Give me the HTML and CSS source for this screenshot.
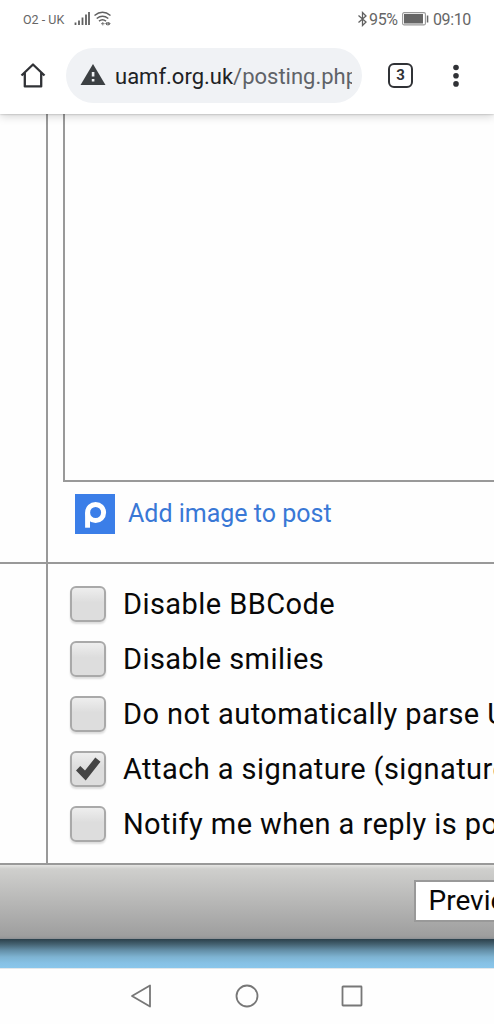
FILE: index.html
```html
<!DOCTYPE html>
<html lang="en">
<head>
<meta charset="utf-8">
<title>Post a reply</title>
<link rel="stylesheet" href="styles.css">
</head>
<body>
<div class="phone">
  <header class="chrome">
    <div class="status">
      <span class="carrier">O2 - UK</span>
      <svg class="signal" width="38" height="18" viewBox="0 0 38 18" fill="none">
        <path d="M1.500 16v-2.500M5 16v-4.500M8.500 16v-7.500M12 16v-10.500M15 16v-13" stroke="#606060" stroke-width="1.800"/>
        <path d="M20.500 6.500Q28.500 0 36.500 6.500M22.700 9.500Q28.500 5 34.300 9.500M25 12.200Q28.500 9.500 32 12.200" stroke="#606060" stroke-width="1.500"/>
        <path d="M27 14.700h3.600M28.800 13v3.400M33.200 13.200l-1.500 1.500 1.500 1.500zM34.600 13.200l1.500 1.500-1.500 1.500z" stroke="#606060" stroke-width=".8" fill="#606060"/>
      </svg>
      <svg class="bluetooth" width="11" height="16" viewBox="0 0 11 16" fill="none" stroke="#606060" stroke-width="1.300"><path d="M1.500 4.500L9 11 5.500 14.500v-13L9 5 1.500 11.500"/></svg>
      <span class="percent">95%</span>
      <svg class="battery" width="27" height="14" viewBox="0 0 27 14"><rect x=".6" y=".6" width="22.800" height="12.300" rx="1.500" fill="none" stroke="#999" stroke-width="1.100"/><path d="M2 2h19v9.500H2z" fill="#666"/><path d="M24.800 3.500h1.500v7h-1.500z" fill="#666"/></svg>
      <span class="clock">09:10</span>
    </div>
    <div class="toolbar">
      <svg class="home" width="26" height="28" viewBox="0 0 26 28" fill="none" stroke="#303236" stroke-width="2.300"><path d="M1.500 14.500L13 3.500 24.500 14.500M4.800 12V25.400h16.400V12" stroke-linejoin="round"/></svg>
      <div class="address">
        <svg width="26" height="22" viewBox="0 0 26 22"><path d="M13 0L25.500 21H.5z" fill="#3c4043"/><path d="M11.800 8h2.600v4.500h-2.600zM11.800 15h2.600v2.600h-2.600z" fill="#f0f2f5"/></svg>
        <div class="url">uamf.org.uk<span class="path">/posting.php</span></div>
      </div>
      <div class="tabs">3</div>
      <svg class="more" width="8" height="24" viewBox="0 0 8 24" fill="#303236"><circle cx="4" cy="3.500" r="2.800"/><circle cx="4" cy="11.700" r="2.800"/><circle cx="4" cy="19.900" r="2.800"/></svg>
    </div>
  </header>
  <main class="page">
    <div class="row message">
      <div class="label"></div>
      <div class="cell">
        <div class="editor"></div>
        <div class="upload">
          <svg width="40" height="40" viewBox="0 0 40 40"><path d="M0 0h40v40H0z" fill="#3b7ee8"/><circle cx="20.600" cy="18.500" r="8" fill="none" stroke="#fff" stroke-width="5"/><path d="M10.100 18.500h4.900v15.200h-4.900z" fill="#fff"/></svg>
          <span>Add image to post</span>
        </div>
      </div>
    </div>
    <div class="row options">
      <div class="label"></div>
      <div class="cell">
        <div class="option"><span class="box"></span><span>Disable BBCode</span></div>
        <div class="option"><span class="box"></span><span>Disable smilies</span></div>
        <div class="option"><span class="box"></span><span>Do not automatically parse URLs</span></div>
        <div class="option"><span class="box"><svg width="30" height="30" viewBox="0 0 30 30"><path d="M3 16.500L7.300 12l4.700 4.600L22.300 3.500l5.200 4.200L12.700 26.500z" fill="#444"/></svg></span><span>Attach a signature (signatures</span></div>
        <div class="option"><span class="box"></span><span>Notify me when a reply is posted</span></div>
      </div>
    </div>
    <div class="actions"><div class="preview">Preview</div></div>
    <div class="backdrop"></div>
  </main>
  <footer class="nav">
    <svg width="22" height="24" viewBox="0 0 22 24"><path d="M20 1.500v21L2 12z"/></svg>
    <svg width="24" height="24" viewBox="0 0 24 24"><circle cx="12" cy="12" r="10.500"/></svg>
    <svg class="recents" width="22" height="22" viewBox="0 0 22 22"><rect x="1.500" y="1.500" width="19" height="19" rx=".5"/></svg>
  </footer>
</div>
</body>
</html>
```
FILE: styles.css
```css
* { box-sizing: border-box; }
body { margin: 0; background: #fefefe; font-family: Roboto, "Liberation Sans", sans-serif; }
svg { display: block; flex: none; }
.phone { width: 100%; height: 1024px; overflow: hidden; display: flex; flex-direction: column; background: #fefefe; }
.chrome { height: 114px; flex: none; background: #fff; position: relative; box-shadow: 0 0 2px rgba(0,0,0,.3), 0 2px 9px rgba(0,0,0,.18); }
.status { height: 38px; display: flex; align-items: center; padding-left: 23px; color: #666; white-space: nowrap; }
.carrier { font-size: 12.5px; width: 51px; flex: none; }
.signal { margin-top: -2px; }
.bluetooth { margin-left: 245px; margin-top: -1px; }
.percent { font-size: 16px; width: 33px; margin-left: 1px; letter-spacing: -.35px; flex: none; }
.battery { margin-left: 0; margin-top: -1px; }
.clock { font-size: 16px; margin-left: 4px; letter-spacing: -.4px; }
.toolbar { height: 76px; display: flex; align-items: flex-start; padding: 10px 0 0 20px; }
.home { margin-top: 13px; }
.address { width: 296px; height: 55px; margin-left: 20px; border-radius: 28px; background: #f0f2f5; display: flex; align-items: center; padding-left: 14px; }
.address svg { margin-top: -2px; }
.url { width: 237px; margin-left: 9px; overflow: hidden; white-space: nowrap; font-size: 22px; line-height: 30px; padding-top: 2px; color: #202124; }
.path { color: #5f6368; }
.tabs { width: 25px; height: 25px; margin: 15px 0 0 26px; border: 2.5px solid #303236; border-radius: 6px; text-align: center; font-size: 15px; line-height: 21px; font-weight: 700; color: #303236; flex: none; }
.more { margin: 16px 0 0 39px; }
.page { height: 854px; flex: none; overflow: hidden; }
.row { display: flex; border-bottom: 2px solid #999; }
.label { width: 48px; flex: none; border-right: 2px solid #999; }
.cell { width: 446px; flex: none; overflow: hidden; }
.message { height: 450px; }
.editor { height: 367.5px; margin-left: 15px; border-left: 2px solid #999; border-bottom: 2px solid #999; }
.upload { display: flex; align-items: center; gap: 13px; margin: 12.5px 0 0 27px; height: 40px; font-size: 25px; line-height: 40px; color: #3978d6; }
.options { height: 301px; }
.options .cell { padding-top: 12px; }
.option { height: 55px; display: flex; align-items: center; padding-left: 22px; gap: 17px; font-size: 29px; letter-spacing: .43px; white-space: nowrap; color: #080808; }
.box { width: 36px; height: 36px; flex: none; border: 2px solid #a9a9a9; border-radius: 6px; background: linear-gradient(#eee, #ddd 45%, #ddd); box-shadow: 0 2px 2px #ddd; }
.box svg { margin: 1px; }
.actions { height: 74px; padding: 15px 0 0 414px; overflow: hidden; background: linear-gradient(#e5e5e3, #cfcfcd 4px, #9f9f9f 70px, #9b9b9b 72px, #8b8f94); }
.preview { width: 130px; height: 42px; border: 2px solid #999; background: #fff; padding-left: 12.5px; font-size: 28px; line-height: 38px; color: #080808; }
.backdrop { height: 29px; background: linear-gradient(#2b404b, #43606f 5px, #628da5 11px, #7eb3d2 18px, #86c1e5 24px, #89c6eb); }
.nav { height: 56px; flex: none; display: flex; align-items: center; padding: 0 0 1px 130px; gap: 83px; border-top: 1px solid #e2e7eb; }
.nav svg { fill: none; stroke: #777; stroke-width: 1.8; stroke-linejoin: round; }
.nav .recents { margin-left: -1.5px; }
```
